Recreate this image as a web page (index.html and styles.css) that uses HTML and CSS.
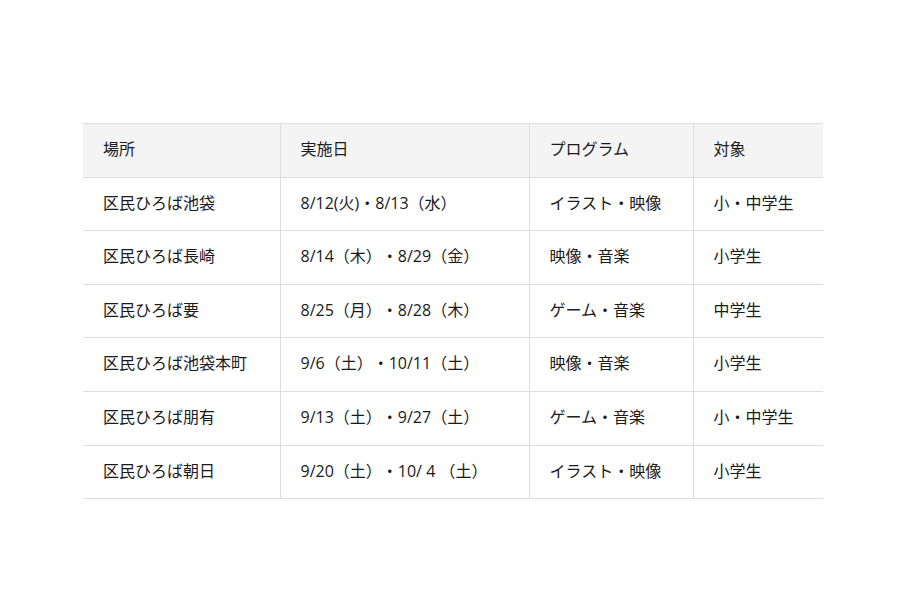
FILE: index.html
```html
<!DOCTYPE html>
<html lang="ja">
<head>
<meta charset="utf-8">
<link rel="stylesheet" href="styles.css">
</head>
<body>
<div class="page">
<table class="schedule">
<colgroup>
<col class="c1"><col class="c2"><col class="c3"><col class="c4">
</colgroup>
<thead>
<tr><th>場所</th><th>実施日</th><th>プログラム</th><th>対象</th></tr>
</thead>
<tbody>
<tr><td>区民ひろば池袋</td><td>8/12(火)・8/13（水）</td><td>イラスト・映像</td><td>小・中学生</td></tr>
<tr><td>区民ひろば長崎</td><td>8/14（木）・8/29（金）</td><td>映像・音楽</td><td>小学生</td></tr>
<tr><td>区民ひろば要</td><td>8/25（月）・8/28（木）</td><td>ゲーム・音楽</td><td>中学生</td></tr>
<tr><td>区民ひろば池袋本町</td><td>9/6（土）・10/11（土）</td><td>映像・音楽</td><td>小学生</td></tr>
<tr><td>区民ひろば朋有</td><td>9/13（土）・9/27（土）</td><td>ゲーム・音楽</td><td>小・中学生</td></tr>
<tr><td>区民ひろば朝日</td><td>9/20（土）・10/ 4 （土）</td><td>イラスト・映像</td><td>小学生</td></tr>
</tbody>
</table>
</div>
</body>
</html>
```
FILE: styles.css
```css
html, body {
  margin: 0;
  padding: 0;
  background: #fff;
}
.page {
  padding: 123px 0 0 83px;
  font-family: "Open Sans", "Noto Sans CJK JP", sans-serif;
  color: #1a1a1a;
  text-spacing-trim: space-all;
}
.schedule {
  border-collapse: collapse;
  table-layout: fixed;
  width: 740px;
  font-size: 16px;
}
.c1 { width: 197px; }
.c2 { width: 249px; }
.c3 { width: 164px; }
.c4 { width: 130px; }
.schedule th,
.schedule td {
  text-align: left;
  font-weight: normal;
  padding: 13px 20px 15px;
  line-height: 24.6px;
  border-top: 1px solid #ddd;
  border-bottom: 1px solid #ddd;
  border-left: 1px solid #ddd;
  white-space: nowrap;
}
.schedule th:first-child,
.schedule td:first-child {
  border-left: none;
}
.schedule thead th {
  background: #f4f4f4;
}
```
